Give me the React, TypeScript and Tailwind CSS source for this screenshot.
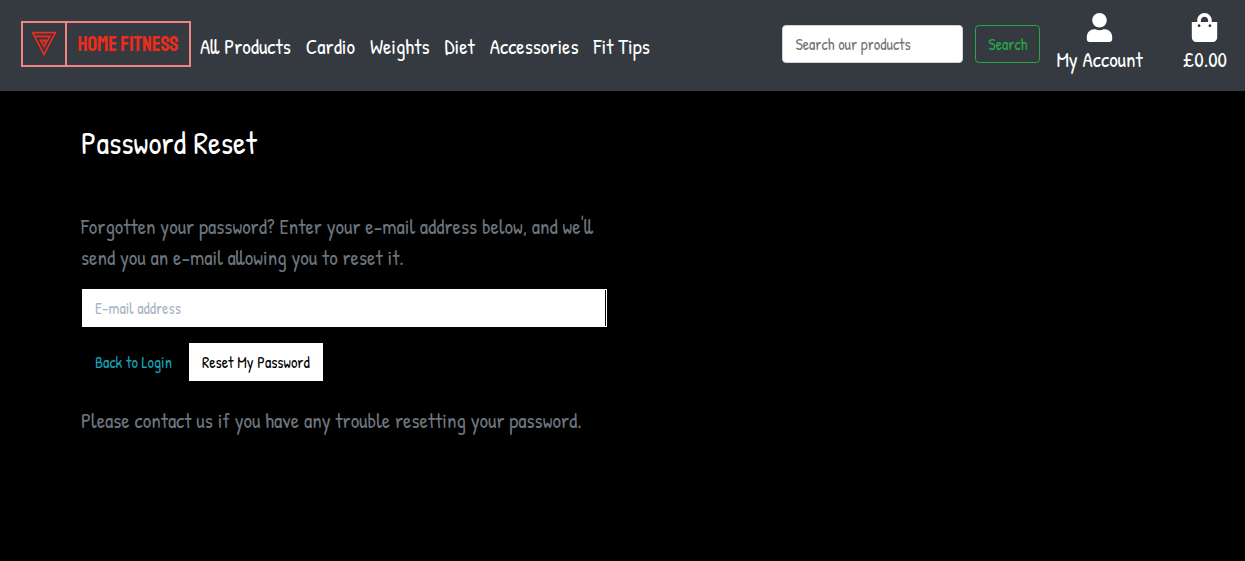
import { FaShoppingBag, FaUser } from "react-icons/fa";

const links = ["All Products", "Cardio", "Weights", "Diet", "Accessories", "Fit Tips"];

function Logo() {
  return (
    <a href="#" aria-label="Home Fitness" className="mb-1 flex h-[46px] w-[170px] shrink-0 border-2 border-[#f08482] text-[#ef2b1d]">
      <span className="flex w-11 items-center justify-center border-r-2 border-[#f08482]">
        <svg viewBox="0 0 26 26" className="h-[26px] w-[26px]" fill="none" stroke="currentColor" strokeWidth="1.6">
          <path d="M1.6 1.6 H24.4 L13 23.4 Z" />
          <path d="M4 5.4 H18.8 L13.2 15.6 L9.4 9.4 H14.6 L13.2 12" />
        </svg>
      </span>
      <span className="flex flex-1 items-center justify-center pt-[2px] font-['Staatliches','Bebas_Neue','Liberation_Sans_Narrow',sans-serif] text-[21px] leading-none whitespace-nowrap">
        HOME FITNESS
      </span>
    </a>
  );
}

export default function App() {
  return (
    <div className="min-h-screen bg-black font-['Patrick_Hand','Liberation_Sans_Narrow',sans-serif] text-white">
      <header className="flex h-[91px] items-center bg-[#343a40] pr-[18px] pl-[21px]">
        <Logo />
        <nav className="ml-[9px] flex gap-[15px] pt-[2px] text-[21px] font-medium whitespace-nowrap">
          {links.map((link) => (
            <a key={link} href="#">{link}</a>
          ))}
        </nav>
        <form className="mb-1 ml-auto flex gap-3" onSubmit={(e) => e.preventDefault()}>
          <input
            type="search"
            aria-label="Search our products"
            placeholder="Search our products"
            className="h-[38px] w-[181px] rounded border border-[#ced4da] bg-white px-3 text-[16px] text-[#495057] placeholder:text-[#757575]"
          />
          <button className="h-[38px] w-[65px] rounded border border-[#28a745] text-[16px] text-[#28a745]">Search</button>
        </form>
        <a href="#" className="mb-1 ml-4 flex flex-col items-center gap-[2px] text-[21px] leading-[31px] font-medium whitespace-nowrap">
          <FaUser size={29} />
          <span>My Account</span>
        </a>
        <a href="#" className="mb-1 ml-10 flex flex-col items-center gap-[2px] text-[21px] leading-[31px] font-medium">
          <FaShoppingBag size={29} />
          <span>£0.00</span>
        </a>
      </header>
      <main className="px-[81px] pt-[33px]">
        <h1 className="text-[32px] leading-[38px] font-medium">Password Reset</h1>
        <div className="mt-[49px] max-w-[526px] text-[21px] leading-[31px] text-[#6c757d]">
          <p>Forgotten your password? Enter your e-mail address below, and we'll send you an e-mail allowing you to reset it.</p>
          <form className="mt-4 pl-px" onSubmit={(e) => e.preventDefault()}>
            <div className="flex border border-white">
              <input
                type="email"
                aria-label="E-mail address"
                placeholder="E-mail address"
                className="mr-px h-9 flex-1 bg-white px-3 text-[16px] text-black placeholder:text-[#aab7c4]"
              />
            </div>
            <div className="mt-4 flex h-[38px] items-center gap-1 text-[16px]">
              <a href="#" className="px-[13px] text-[#17a2b8]">Back to Login</a>
              <button className="h-full bg-white px-[13px] text-black">Reset My Password</button>
            </div>
          </form>
          <p className="mt-6">Please contact us if you have any trouble resetting your password.</p>
        </div>
      </main>
    </div>
  );
}
